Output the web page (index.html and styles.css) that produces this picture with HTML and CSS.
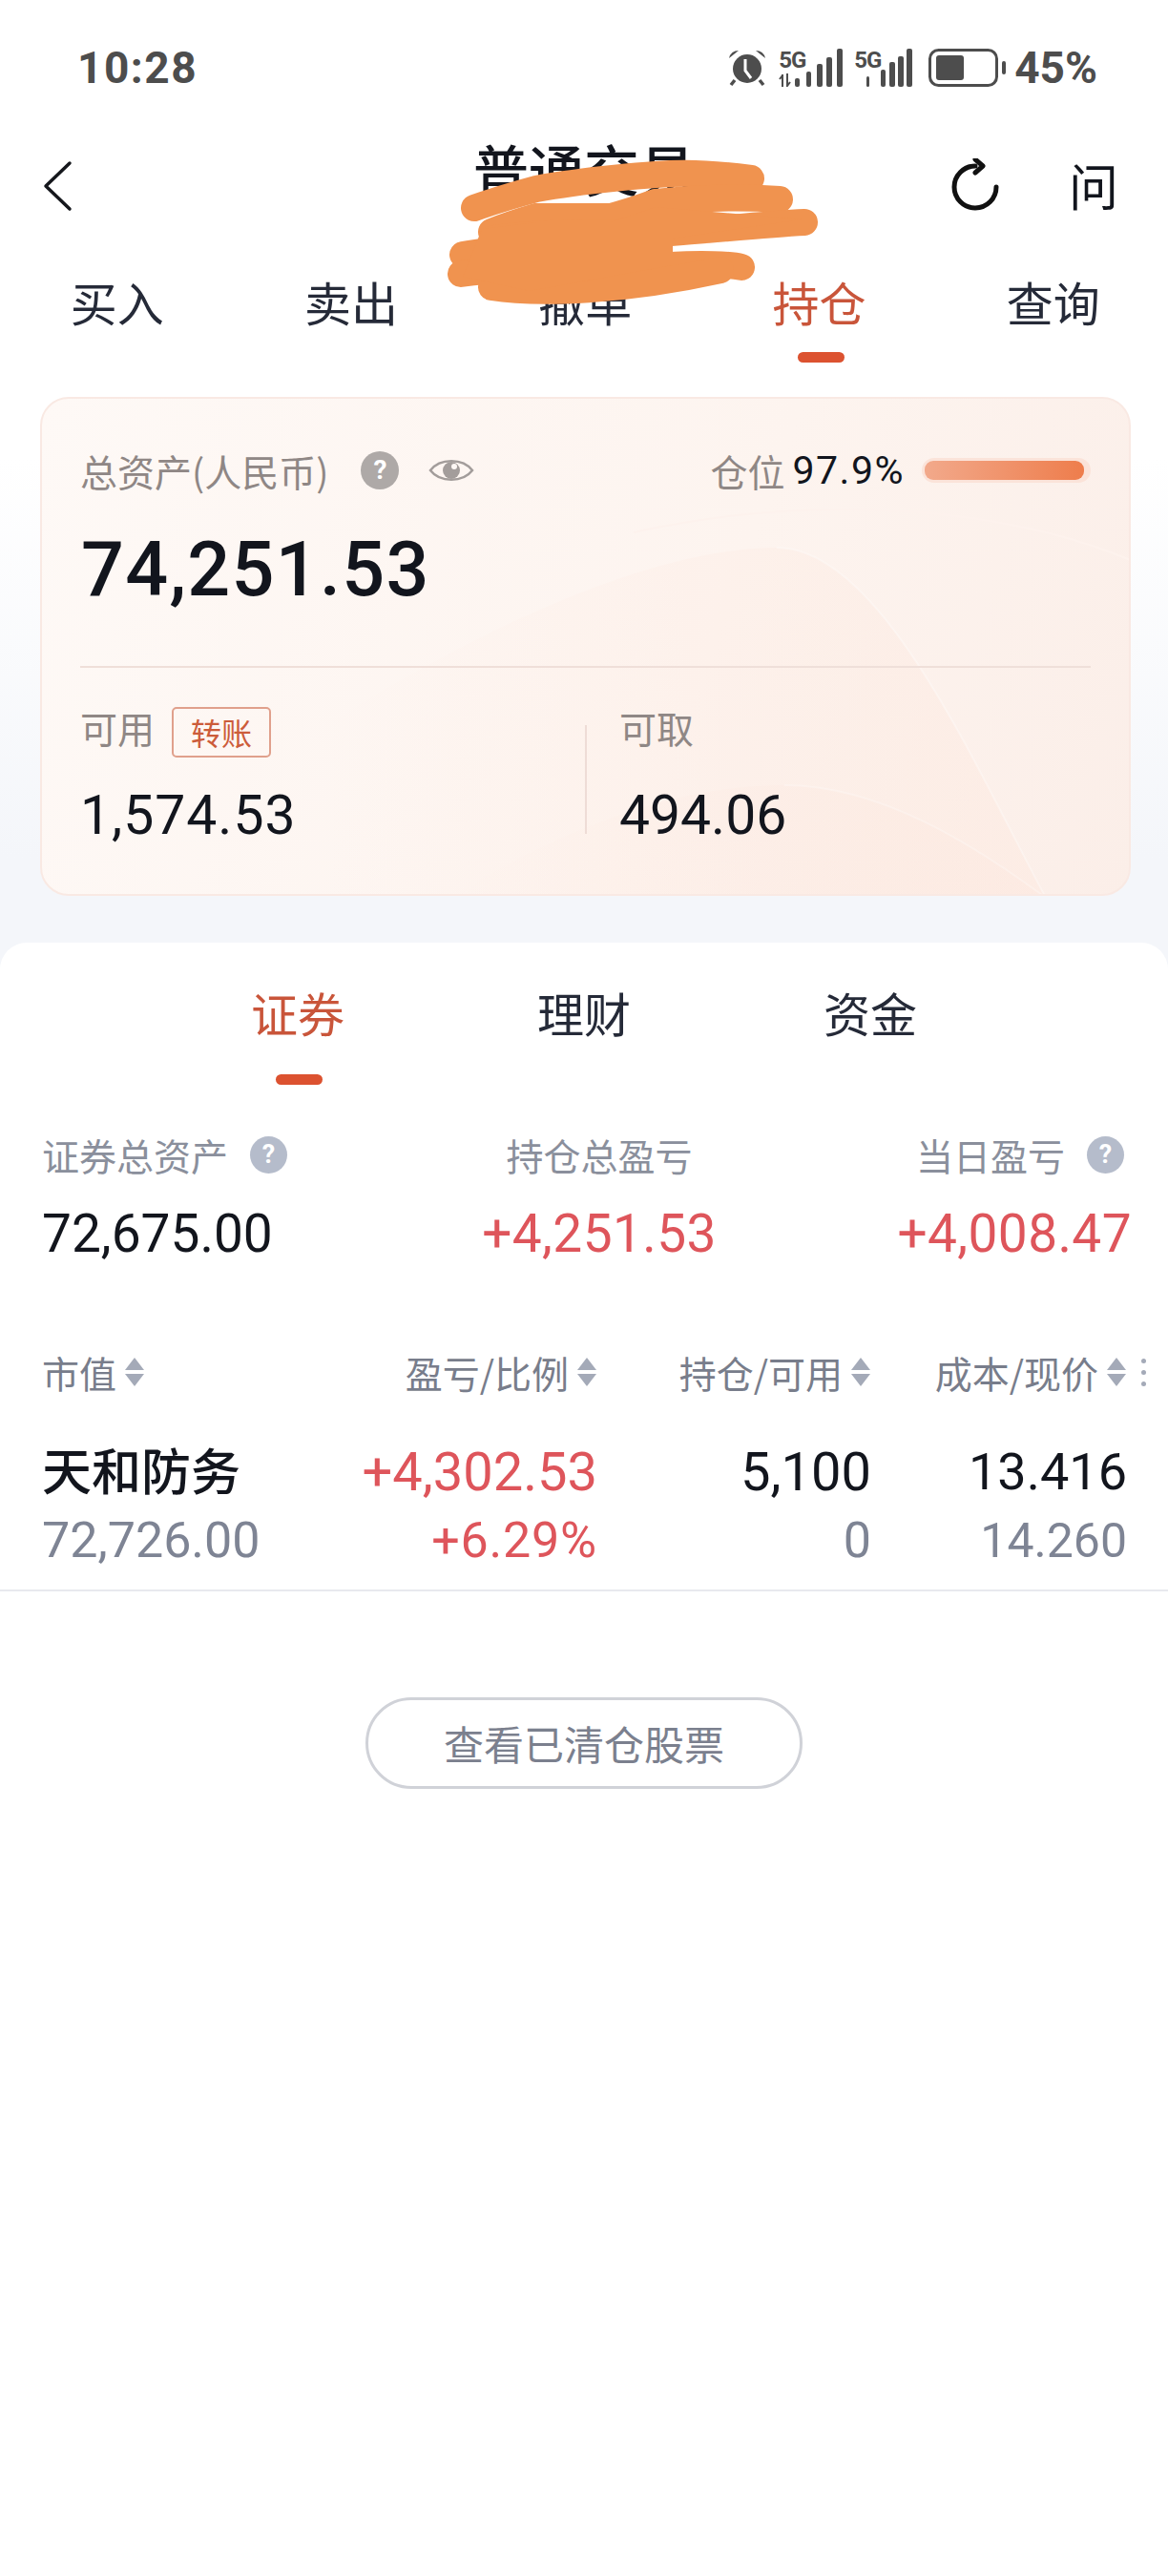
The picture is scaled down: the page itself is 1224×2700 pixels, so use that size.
FILE: index.html
```html
<!DOCTYPE html>
<html lang="zh-CN">
<head>
  <meta charset="UTF-8">
  <title>普通交易</title>
  <link rel="stylesheet" href="styles.css">
</head>
<body>
  <div class="status">
    <span class="time">10:28</span>
    <div class="status-right">
      <svg class="alarm" width="40" height="40" viewBox="0 0 40 40">
        <circle cx="20" cy="21" r="15" fill="#4d4d4d"/>
        <path d="M1 10 Q3 2 11 2 Z M39 10 Q37 2 29 2 Z" fill="#4d4d4d"/>
        <path d="M7 33l-4 5M33 33l4 5" stroke="#4d4d4d" stroke-width="3.5"/>
        <path d="M18 11v12l6 8" fill="none" stroke="#fff" stroke-width="3"/>
      </svg>
      <div class="signal">
        <div class="net">
          <span class="fiveg">5G</span>
          <svg width="22" height="14" viewBox="0 0 22 14">
            <path d="M4 1v13M1 6l3-4M9 0v13l3-4" fill="none" stroke="#4d4d4d" stroke-width="2"/>
            <rect x="17" y="5" width="5" height="9" rx="2" fill="#4d4d4d"/>
          </svg>
        </div>
        <svg width="38" height="40" viewBox="0 0 38 40">
          <rect x="0" y="24" width="5" height="16" rx="2" fill="#4d4d4d"/>
          <rect x="11" y="16" width="6" height="24" rx="2" fill="#4d4d4d"/>
          <rect x="21" y="9" width="6" height="31" rx="2" fill="#4d4d4d"/>
          <rect x="32" y="0" width="6" height="40" rx="2" fill="#4d4d4d"/>
        </svg>
      </div>
      <div class="signal second">
        <div class="net">
          <span class="fiveg">5G</span>
          <svg width="16" height="14" viewBox="0 0 16 14">
            <rect x="13" y="3" width="3" height="11" rx="1.5" fill="#4d4d4d"/>
          </svg>
        </div>
        <svg width="33" height="40" viewBox="0 0 33 40">
          <rect x="0" y="22" width="5" height="18" rx="2" fill="#4d4d4d"/>
          <rect x="9" y="14" width="6" height="26" rx="2" fill="#4d4d4d"/>
          <rect x="18" y="8" width="6" height="32" rx="2" fill="#4d4d4d"/>
          <rect x="27" y="0" width="6" height="40" rx="2" fill="#4d4d4d"/>
        </svg>
      </div>
      <svg class="battery" width="81" height="40" viewBox="0 0 81 40">
        <rect x="1.5" y="1.5" width="70" height="37" rx="9" fill="none" stroke="#4d4d4d" stroke-width="3"/>
        <rect x="8" y="7" width="29" height="26" rx="3" fill="#4d4d4d"/>
        <rect x="77" y="13" width="4" height="14" rx="2" fill="#4d4d4d"/>
      </svg>
      <span class="pct">45%</span>
    </div>
  </div>

  <div class="nav">
    <svg class="back" width="32" height="54" viewBox="0 0 32 54">
      <path d="M29 3 L4 27 L29 51" fill="none" stroke="#15171c" stroke-width="3.5" stroke-linecap="round" stroke-linejoin="round"/>
    </svg>
    <h1 class="title">普通交易</h1>
    <div class="nav-right">
      <svg width="52" height="56" viewBox="0 0 52 56">
        <path d="M26 8 A22 22 0 1 0 48 30" fill="none" stroke="#111" stroke-width="5" stroke-linecap="round"/>
        <path d="M26 1 L34 8 L26 15" fill="none" stroke="#111" stroke-width="5" stroke-linecap="round" stroke-linejoin="round"/>
      </svg>
      <span class="ask">问</span>
    </div>
  </div>

  <div class="tabs">
    <div class="tab">买入</div>
    <div class="tab">卖出</div>
    <div class="tab">撤单</div>
    <div class="tab active">持仓</div>
    <div class="tab">查询</div>
  </div>

  <div class="card">
    <svg class="waves" width="1143" height="523" viewBox="0 0 1143 523">
      <defs>
        <linearGradient id="hill" x1="0" y1="0" x2="1" y2="0">
          <stop offset="0" stop-color="#fde9e0" stop-opacity="0"/>
          <stop offset="1" stop-color="#fde9e0" stop-opacity=".5"/>
        </linearGradient>
      </defs>
      <path d="M300 340 C460 240 640 156 770 156 C880 156 980 390 1052 523 L300 523 Z" fill="url(#hill)"/>
      <path d="M428 523 C560 440 680 405 778 405 C880 405 980 470 1052 523 Z" fill="url(#hill)"/>
      <path d="M770 156 C880 156 980 390 1052 523" fill="none" stroke="#fff" stroke-opacity=".3" stroke-width="2"/>
      <path d="M778 405 C880 405 980 470 1052 523" fill="none" stroke="#fff" stroke-opacity=".25" stroke-width="2"/>
      <path d="M620 140 C800 100 1000 110 1143 170" fill="none" stroke="#fdf2ed" stroke-width="2"/>
    </svg>
    <div class="card-top">
      <div class="row-label">
        <span class="lab">总资产(人民币)</span>
        <span class="help warm">?</span>
        <svg class="eye" width="48" height="32" viewBox="0 0 48 32">
          <path d="M2 16 C12 3 36 3 46 16 C36 29 12 29 2 16 Z" fill="none" stroke="#a39d9b" stroke-width="2.5"/>
          <circle cx="24" cy="16" r="9" fill="#a39d9b"/>
          <circle cx="27" cy="12" r="3" fill="#fdf8f5"/>
        </svg>
      </div>
      <div class="position">
        <span class="lab">仓位</span>
        <span class="pos-num">97.9%</span>
        <div class="bar"><div class="bar-fill" style="width: 97.9%"></div></div>
      </div>
    </div>
    <div class="total">74,251.53</div>
    <div class="card-line"></div>
    <div class="card-bottom">
      <div class="cell">
        <div class="cell-label">
          <span class="lab">可用</span>
          <span class="transfer">转账</span>
        </div>
        <div class="cell-num">1,574.53</div>
      </div>
      <div class="cell cell-right">
        <div class="cell-label">
          <span class="lab">可取</span>
        </div>
        <div class="cell-num">494.06</div>
      </div>
    </div>
  </div>

  <div class="sheet">
    <div class="sub-tabs">
      <div class="sub-tab active">证券</div>
      <div class="sub-tab">理财</div>
      <div class="sub-tab">资金</div>
    </div>

    <div class="stats">
      <div class="stat">
        <div class="stat-label">证券总资产<span class="help cool">?</span></div>
        <div class="stat-num">72,675.00</div>
      </div>
      <div class="stat mid">
        <div class="stat-label">持仓总盈亏</div>
        <div class="stat-num red">+4,251.53</div>
      </div>
      <div class="stat end">
        <div class="stat-label">当日盈亏<span class="help cool">?</span></div>
        <div class="stat-num red">+4,008.47</div>
      </div>
    </div>

    <div class="thead">
      <div class="th left">市值<i class="sort"></i></div>
      <div class="th">盈亏/比例<i class="sort"></i></div>
      <div class="th">持仓/可用<i class="sort"></i></div>
      <div class="th">成本/现价<i class="sort"></i></div>
      <div class="dots"><b></b><b></b><b></b></div>
    </div>

    <div class="holding">
      <div class="cell-name">
        <div class="name">天和防务</div>
        <div class="sub num">72,726.00</div>
      </div>
      <div class="cell-val">
        <div class="top num red">+4,302.53</div>
        <div class="sub num red">+6.29%</div>
      </div>
      <div class="cell-val">
        <div class="top num">5,100</div>
        <div class="sub num">0</div>
      </div>
      <div class="cell-val tight">
        <div class="top num">13.416</div>
        <div class="sub num">14.260</div>
      </div>
    </div>

    <div class="cleared-wrap">
      <div class="cleared">查看已清仓股票</div>
    </div>
  </div>

  <!-- scribble over the account name -->
  <svg class="scribble" width="420" height="180" viewBox="0 0 420 180">
    <g fill="none" stroke="#f0934f" stroke-width="28" stroke-linecap="round">
      <path d="M42 63 C70 53 107 43 107 43 C160 33 232 28 232 28 C270 25 300 28 332 32"/>
      <path d="M60 88 C80 80 107 72 107 72 L185 72 C205 67 232 57 232 57 C280 52 330 52 362 54"/>
      <path d="M62 95 C130 85 200 92 248 89 C300 85 350 80 388 78"/>
      <path d="M30 112 C100 100 180 100 240 88"/>
      <path d="M28 132 C100 122 200 128 248 123 C280 121 310 122 322 125"/>
      <path d="M60 146 C110 154 200 150 300 128"/>
    </g>
    <path d="M50 85 L107 78 L185 78 L232 62 L385 75 L250 95 L250 123 L100 150 L30 135 Z" fill="#f0934f"/>
  </svg>
</body>
</html>
```

FILE: styles.css
```css
* {
  box-sizing: border-box;
}
body {
  margin: 0;
  width: 1224px;
  height: 2700px;
  position: relative;
  overflow: hidden;
  background: linear-gradient(#fff 0, #fff 480px, #f4f6fa 900px);
  color: #12151d;
  font-family: "Noto Sans CJK SC", sans-serif;
}
.status {
  height: 140px;
  padding: 44px 74px 0 81px;
  display: flex;
  justify-content: space-between;
  align-items: flex-start;
}
.time,
.pct {
  font-family: Roboto, sans-serif;
  font-weight: 700;
  font-size: 46px;
  line-height: 54px;
  color: #4d4d4d;
}
.time {
  letter-spacing: 1.5px;
}
.status-right {
  display: flex;
  align-items: center;
  height: 54px;
}
.signal {
  display: flex;
  align-items: flex-end;
  width: 67px;
  height: 40px;
  margin-left: 13px;
}
.signal.second {
  width: 61px;
  margin-left: 12px;
}
.net {
  display: flex;
  flex-direction: column;
  justify-content: space-between;
  width: 29px;
  height: 40px;
  flex: none;
}
.signal.second .net {
  width: 28px;
}
.fiveg {
  font-family: Roboto, sans-serif;
  font-weight: 700;
  font-size: 24px;
  line-height: 24px;
  letter-spacing: -1px;
  color: #4d4d4d;
}
.battery {
  margin-left: 17px;
}
.pct {
  margin-left: 9px;
}
.nav {
  height: 110px;
  padding: 0 52px 0 44px;
  position: relative;
  display: flex;
  justify-content: space-between;
  align-items: center;
}
.title {
  position: absolute;
  left: 0;
  right: 0;
  top: -4px;
  margin: 0;
  font-size: 58px;
  line-height: 80px;
  font-weight: 500;
  text-align: center;
}
.nav-right {
  display: flex;
  align-items: center;
  gap: 72px;
  margin-top: -2px;
}
.ask {
  font-size: 52px;
  line-height: 60px;
}
.tabs {
  display: grid;
  grid-template-columns: repeat(5, 245.3px);
  height: 166px;
}
.tab {
  position: relative;
  text-align: center;
  font-size: 49px;
  line-height: 60px;
  padding-top: 36px;
  color: #252a38;
}
.tab.active,
.sub-tab.active {
  color: #c9553a;
}
.tab.active::after,
.sub-tab.active::after {
  content: "";
  position: absolute;
  left: 50%;
  width: 49px;
  height: 11px;
  margin-left: -23px;
  border-radius: 6px;
  background: #dc5230;
}
.tab.active::after {
  top: 119px;
}
.card {
  position: relative;
  overflow: hidden;
  margin: 0 39px 0 42px;
  height: 523px;
  padding: 48px 40px 0 40px;
  border: 2px solid #f9e9e3;
  border-radius: 30px;
  background: linear-gradient(110deg, #fef9f6 0%, #fdf4ef 60%, #fbeee8 100%);
}
.waves {
  position: absolute;
  left: 0;
  top: 0;
}
.card-top {
  position: relative;
  display: flex;
  justify-content: space-between;
  align-items: center;
  height: 54px;
}
.row-label,
.position,
.cell-label {
  display: flex;
  align-items: center;
}
.lab {
  font-size: 39px;
  line-height: 54px;
  color: #8f8785;
}
.help {
  display: inline-block;
  border-radius: 50%;
  color: #fff;
  font-family: Roboto, sans-serif;
  font-weight: 700;
  text-align: center;
}
.help.warm {
  width: 40px;
  height: 40px;
  margin-left: 34px;
  font-size: 28px;
  line-height: 40px;
  background: #aea9a7;
}
.eye {
  margin-left: 31px;
}
.pos-num {
  margin-left: 8px;
  font-family: Roboto, sans-serif;
  font-size: 41px;
  line-height: 54px;
  letter-spacing: 1.5px;
}
.bar {
  width: 177px;
  height: 26px;
  margin-left: 18px;
  padding: 3px;
  border-radius: 13px;
  background: #fbe3d9;
}
.bar-fill {
  height: 20px;
  border-radius: 9px;
  background: linear-gradient(90deg, #f2a98b, #ee7d4c);
}
.total {
  position: relative;
  margin: 29px 0 0 1px;
  font-family: Roboto, sans-serif;
  font-size: 79px;
  line-height: 96px;
  font-weight: 500;
  letter-spacing: 1.3px;
}
.card-line {
  position: relative;
  height: 2px;
  margin-top: 53px;
  background: #efdfd9;
}
.card-bottom {
  position: relative;
  display: grid;
  grid-template-columns: 529px 1fr;
}
.cell {
  padding-top: 35px;
}
.cell-right {
  position: relative;
  padding-left: 36px;
}
.cell-right .cell-num {
  letter-spacing: 0;
}
.cell-right::before {
  content: "";
  position: absolute;
  left: 0;
  top: 60px;
  width: 2px;
  height: 114px;
  background: #eedcd6;
}
.cell-label {
  height: 54px;
}
.transfer {
  width: 104px;
  height: 53px;
  margin: 5px 0 -5px 18px;
  border: 2px solid #e0a08c;
  border-radius: 5px;
  color: #cc5c3a;
  font-size: 32px;
  line-height: 48px;
  text-align: center;
}
.cell-num {
  margin-top: 32px;
  font-family: Roboto, sans-serif;
  font-size: 57px;
  line-height: 68px;
  letter-spacing: 1px;
}
.sheet {
  position: absolute;
  left: 0;
  right: 0;
  top: 988px;
  bottom: 0;
  border-radius: 28px 28px 0 0;
  background: #fff;
}
.sub-tabs {
  display: grid;
  grid-template-columns: 300px 300px 300px;
  justify-content: center;
  height: 195px;
}
.sub-tab {
  position: relative;
  padding-top: 43px;
  font-size: 49px;
  line-height: 60px;
  text-align: center;
  color: #252a38;
}
.sub-tab.active::after {
  top: 138px;
}
.stats {
  display: grid;
  grid-template-columns: 424px 320px 1fr;
  padding: 0 38px 0 44px;
}
.stat.mid {
  text-align: center;
}
.stat.end {
  text-align: right;
}
.stat-label {
  font-size: 39px;
  line-height: 54px;
  color: #8a8f9c;
  display: flex;
  align-items: center;
}
.mid .stat-label {
  justify-content: center;
}
.end .stat-label {
  justify-content: flex-end;
}
.help.cool {
  width: 39px;
  height: 39px;
  margin-left: 23px;
  font-size: 27px;
  line-height: 39px;
  background: #b5bccb;
}
.end .help.cool {
  margin-right: 8px;
}
.stat-num {
  margin-top: 23px;
  font-family: Roboto, sans-serif;
  font-size: 55px;
  line-height: 66px;
}
.stat-num.red {
  letter-spacing: .4px;
}
.red {
  color: #de555b;
}
.thead,
.holding {
  display: grid;
  grid-template-columns: 290px 292px 287px 268px 1fr;
  padding-left: 44px;
}
.thead {
  margin-top: 84px;
  align-items: center;
  height: 56px;
}
.th {
  display: flex;
  justify-content: flex-end;
  align-items: center;
  font-size: 39px;
  line-height: 56px;
  color: #787d8b;
}
.th.left {
  justify-content: flex-start;
}
.sort {
  position: relative;
  width: 21px;
  height: 30px;
  margin-left: 9px;
}
.sort::before,
.sort::after {
  content: "";
  position: absolute;
  left: 0;
  border-left: 10.5px solid transparent;
  border-right: 10.5px solid transparent;
}
.sort::before {
  top: 0;
  border-bottom: 13px solid #a4aab8;
}
.sort::after {
  bottom: 0;
  border-top: 13px solid #a4aab8;
}
.dots {
  display: flex;
  flex-direction: column;
  gap: 7px;
  padding-left: 15px;
}
.dots b {
  width: 5px;
  height: 5px;
  border-radius: 50%;
  background: #a4aab8;
}
.holding {
  margin-top: 44px;
  height: 158px;
  border-bottom: 2px solid #e8e9ee;
}
.name {
  font-size: 52px;
  line-height: 60px;
  font-weight: 500;
  color: #12151d;
}
.cell-name .sub {
  margin-top: 15px;
}
.cell-val {
  text-align: right;
}
.num {
  font-family: Roboto, sans-serif;
}
.top {
  font-size: 56px;
  line-height: 66px;
}
.sub {
  font-size: 52px;
  line-height: 60px;
  margin-top: 9px;
  color: #7e8494;
}
.sub.red {
  color: #de555b;
  letter-spacing: .8px;
}
.tight .top {
  font-size: 54px;
}
.tight .sub {
  font-size: 50px;
}
.cleared-wrap {
  display: flex;
  justify-content: center;
  margin-top: 111px;
}
.cleared {
  width: 458px;
  height: 96px;
  border: 3px solid #d0d2d8;
  border-radius: 48px;
  text-align: center;
  font-size: 42px;
  line-height: 90px;
  color: #7b808e;
}
.scribble {
  position: absolute;
  left: 455px;
  top: 155px;
}
```
